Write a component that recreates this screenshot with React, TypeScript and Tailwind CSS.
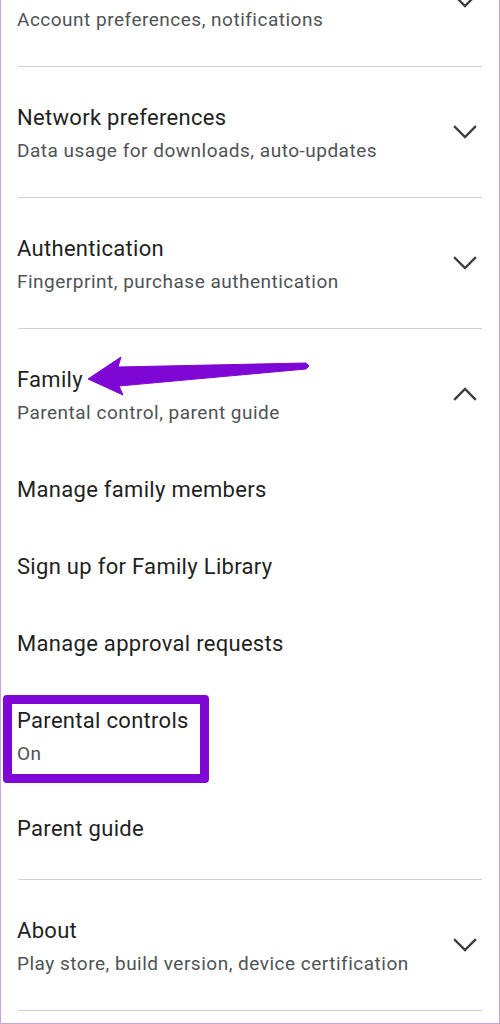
import React from 'react';

const PURPLE = '#7e07d6';

const Chevron = ({ up = false }: { up?: boolean }) => (
  <svg width="26" height="26" viewBox="0 0 26 26" className="mr-[4px] mb-[6px] shrink-0" fill="none">
    <path
      d={up ? 'M3 18 L13 8 L23 18' : 'M3 8 L13 18 L23 8'}
      stroke="#3c3f42"
      strokeWidth="2.4"
      strokeLinecap="square"
    />
  </svg>
);

const Divider = () => <div className="mx-[17px] h-px bg-[#d0d0d0]" />;

interface SectionProps {
  title: string;
  subtitle: string;
  expanded?: boolean;
  bottom?: string;
  children?: React.ReactNode;
}

const Title = ({ children }: { children: React.ReactNode }) => (
  <div className="text-[22px] leading-[28px] tracking-[0.3px] text-[#1f1f1f]">{children}</div>
);

const Subtitle = ({ children }: { children: React.ReactNode }) => (
  <div className="mt-[5px] text-[19px] leading-[28px] tracking-[0.5px] text-[#4f5356]">{children}</div>
);

const Section: React.FC<SectionProps> = ({ title, subtitle, expanded = false, bottom = 'pb-[32px]', children }) => (
  <div className={`relative flex items-center justify-between pl-[16px] pr-[17px] pt-[37px] ${bottom}`}>
    <div>
      <Title>{title}</Title>
      <Subtitle>{subtitle}</Subtitle>
    </div>
    <Chevron up={expanded} />
    {children}
  </div>
);

const SubItem = ({ label }: { label: string }) => (
  <div className="flex h-[77px] items-center px-[16px]">
    <Title>{label}</Title>
  </div>
);

export default function App() {
  return (
    <div
      className="h-[1024px] w-[500px] overflow-hidden border-x border-b border-[#c9a4e2] bg-white"
      style={{ fontFamily: 'Roboto, "Noto Sans", sans-serif' }}
    >
      <div className="-mt-[64px]">
        <Section title="General" subtitle="Account preferences, notifications" />
        <Divider />
        <Section title="Network preferences" subtitle="Data usage for downloads, auto-updates" />
        <Divider />
        <Section title="Authentication" subtitle="Fingerprint, purchase authentication" />
        <Divider />
        <Section title="Family" subtitle="Parental control, parent guide" expanded bottom="pb-[24px]">
          {/* annotation arrow */}
          <svg className="absolute left-[85px] top-[26px]" width="226" height="44" viewBox="0 0 226 44">
            <polygon
              points="2,24 35,2 32,12 220,8 223,11 220,14 33,31 37,40"
              fill={PURPLE}
              stroke={PURPLE}
              strokeWidth="1"
              strokeLinejoin="round"
            />
          </svg>
        </Section>
        <SubItem label="Manage family members" />
        <SubItem label="Sign up for Family Library" />
        <SubItem label="Manage approval requests" />
        <div className="relative px-[16px] pt-[25px] pb-[22px]">
          <Title>Parental controls</Title>
          <Subtitle>On</Subtitle>
          <div
            className="absolute left-[2px] top-[13px] h-[88px] w-[206px] rounded-[4px] border-[9px]"
            style={{ borderColor: PURPLE }}
          />
        </div>
        <SubItem label="Parent guide" />
        <div className="h-[12px]" />
        <Divider />
        <Section title="About" subtitle="Play store, build version, device certification" />
        <Divider />
      </div>
    </div>
  );
}
